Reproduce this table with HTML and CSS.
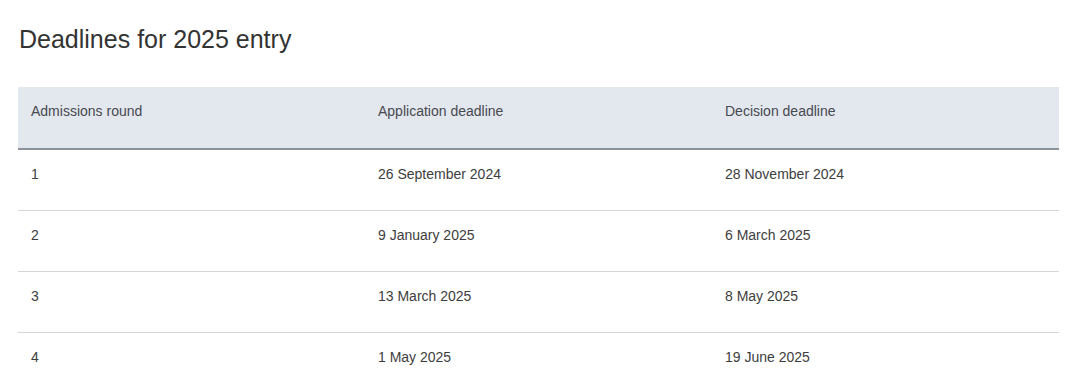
FILE: index.html
```html
<!DOCTYPE html>
<html lang="en">
<head>
<meta charset="utf-8">
<title>Deadlines for 2025 entry</title>
<link rel="stylesheet" href="styles.css">
</head>
<body>
<main class="page">
  <h2 class="title">Deadlines for 2025 entry</h2>
  <table class="deadlines">
    <thead>
      <tr>
        <th>Admissions round</th>
        <th>Application deadline</th>
        <th>Decision deadline</th>
      </tr>
    </thead>
    <tbody>
      <tr><td>1</td><td>26 September 2024</td><td>28 November 2024</td></tr>
      <tr><td>2</td><td>9 January 2025</td><td>6 March 2025</td></tr>
      <tr><td>3</td><td>13 March 2025</td><td>8 May 2025</td></tr>
      <tr><td>4</td><td>1 May 2025</td><td>19 June 2025</td></tr>
    </tbody>
  </table>
</main>
</body>
</html>
```

FILE: styles.css
```css
html, body {
  margin: 0;
  padding: 0;
  background: #ffffff;
}

body {
  font-family: "Liberation Sans", Arial, sans-serif;
  color: #3a3a3a;
}

.page {
  padding: 25px 21px 0 18px;
}

.title {
  margin: 0 0 0 1px;
  font-size: 25px;
  line-height: 28px;
  font-weight: normal;
  color: #333333;
}

.deadlines {
  margin-top: 34px;
  width: 100%;
  border-collapse: collapse;
  table-layout: fixed;
  font-size: 14px;
}

.deadlines th,
.deadlines td {
  text-align: left;
  padding: 16px 13px 28px;
  line-height: 16px;
  font-weight: normal;
  vertical-align: top;
}

.deadlines th {
  background: #e3e7ee;
  color: #474a50;
  padding-bottom: 29px;
  border-bottom: 2px solid #8e939b;
}

.deadlines td {
  color: #3d3d3d;
  border-bottom: 1px solid #d6d6d6;
}

.deadlines tbody tr:last-child td {
  border-bottom: none;
}
```
